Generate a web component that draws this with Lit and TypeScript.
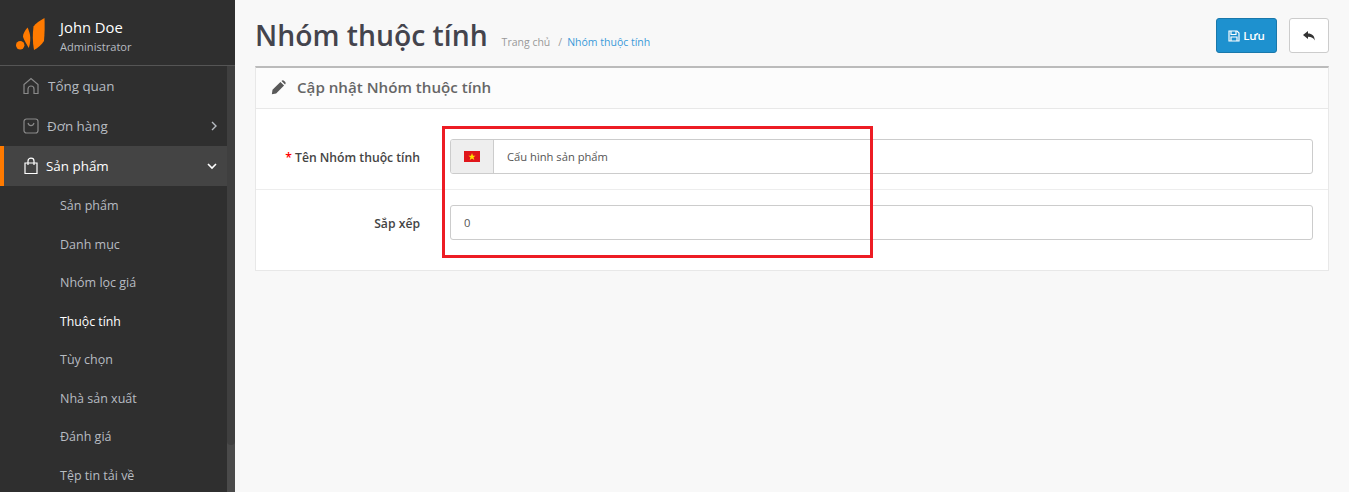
import { LitElement, html, css } from "lit";
import { customElement } from "lit/decorators.js";

const subs = ["Sản phẩm", "Danh mục", "Nhóm lọc giá", "Thuộc tính", "Tùy chọn", "Nhà sản xuất", "Đánh giá", "Tệp tin tải về"];

@customElement("app-root")
export class AppRoot extends LitElement {
  static styles = css`
    :host { display: block; width: 1349px; height: 492px; overflow: hidden; position: relative; background: #f8f8f8; font-family: "Open Sans", "Noto Sans", sans-serif; }
    * { box-sizing: border-box; }
    .page { display: flex; height: 492px; }
    .side { width: 235px; flex: none; background: #2f2f2f; display: flex; flex-direction: column; color: #b7bcc2; }
    .user { height: 66px; flex: none; border-bottom: 1px solid #555; display: flex; align-items: flex-start; padding: 17px 0 0 16px; }
    .logo { width: 29px; height: 34px; flex: none; margin-right: 15px; }
    .uname { color: #fff; font-size: 14.8px; line-height: 20px; }
    .urole { color: #b7bcc2; font-size: 11.1px; line-height: 16px; margin-top: 2px; }
    .body { flex: 1; display: flex; min-height: 0; }
    .menu { width: 227px; flex: none; overflow: hidden; }
    .track { width: 8px; flex: none; background: #4a4a4a; display: flex; flex-direction: column; }
    .thumb { height: 379px; background: #3f3f3f; border-radius: 0 0 4px 4px; }
    .item { height: 40px; display: flex; align-items: center; font-size: 13.4px; padding: 0 0 0 22px; position: relative; color: #b7bcc2; }
    .item svg.ic { width: 18px; height: 18px; flex: none; margin: 0 7px 0 0; }
    .item.home svg.ic { margin-right: 8px; }
    .item.active { background: #444; color: #fff; border-left: 4px solid #ff7a00; padding-left: 18px; }
    .item.active svg.ic { margin-right: 6px; }
    .chev { margin-left: auto; margin-right: 8px; width: 10px; height: 10px; flex: none; }
    .active .chev { margin-right: 10px; }
    .sub { height: 38.5px; display: flex; align-items: center; padding-left: 60px; font-size: 12.5px; color: #b7bcc2; }
    .sub.on { color: #fff; font-weight: 500; font-size: 12.3px; }
    .subs { padding-top: 0.4px; }
    .main { flex: 1; min-width: 0; padding: 0 20px; }
    .head { height: 66px; display: flex; align-items: flex-start; }
    h1 { margin: 13px 0 0 0; font-weight: 600; font-size: 28.3px; line-height: 44px; color: #44444d; }
    .crumb { margin: 35px 0 0 14px; font-size: 10.5px; line-height: 15px; color: #999; white-space: nowrap; }
    .crumb span { margin: 0 5px 0 8px; }
    .crumb a { color: #3a9ad9; }
    .acts { margin-left: auto; display: flex; gap: 12px; padding-top: 18px; }
    .btn { height: 35px; border-radius: 3px; display: flex; align-items: center; justify-content: center; }
    .save { width: 61px; background: #1e91cf; border: 1px solid #1978ab; color: #fff; font-size: 11.5px; font-weight: 600; gap: 3px; }
    .back { width: 40px; background: #fff; border: 1px solid #ccc; }
    .card { background: #fff; border: 1px solid #e8e8e8; border-top: 2px solid #bbb; }
    .ctitle { height: 41px; background: #fcfcfc; border-bottom: 1px solid #e8e8e8; display: flex; align-items: center; padding: 0 0 2px 15px; font-size: 15.15px; font-weight: 600; color: #666; }
    .ctitle svg { width: 15px; height: 15px; margin: 1px 11px 0 0; }
    .row { display: flex; align-items: flex-start; padding-right: 15px; }
    .row.r1 { height: 80px; padding-top: 30px; }
    .row.r2 { height: 81px; padding-top: 15px; border-top: 1px solid #ededed; }
    .lab { width: 164px; flex: none; text-align: right; font-size: 12.2px; font-weight: 600; color: #444; line-height: 37px; }
    .lab b { color: #f00; font-weight: 600; }
    .ctrl { margin-left: 30px; flex: 1; display: flex; height: 35px; border: 1px solid #ccc; border-radius: 3px; overflow: hidden; background: #fff; font-size: 11.2px; color: #555; align-items: center; }
    .addon { width: 43px; height: 100%; background: #eee; border-right: 1px solid #ccc; display: flex; align-items: center; justify-content: center; flex: none; }
    .addon svg { width: 16px; height: 11px; }
    .val { padding-left: 13px; }
    .mark { position: absolute; left: 442px; top: 126px; width: 431px; height: 132px; border: 3px solid #ed1c24; pointer-events: none; }
  `;

  render() {
    return html`
      <div class="page">
        <aside class="side">
          <div class="user">
            <svg class="logo" viewBox="0 0 29 34">
              <circle cx="4.2" cy="28.3" r="4.2" fill="#ff7a00"/>
              <path d="M11.5 10.5 C8.5 14 7 17 7 19.5 C7.5 22 9.5 25 12.8 31 C14.5 26 14.5 21 14 18 C13.5 15 12.5 12.5 11.5 10.5 Z" fill="#ff7a00"/>
              <path d="M28.5 1 C24 3.5 19.5 6.5 17.5 9.5 C16.5 17 16.5 25 18 33 C22 31 26 27.5 28 24 C28.7 16 28.8 8 28.5 1 Z" fill="#ff7a00"/>
            </svg>
            <div>
              <div class="uname">John Doe</div>
              <div class="urole">Administrator</div>
            </div>
          </div>
          <div class="body">
            <nav class="menu">
              <div class="item home">
                <svg class="ic" viewBox="0 0 18 18" fill="none" stroke="#8a8a8a" stroke-width="1.2">
                  <path d="M2 16.5 V7.5 L9 1.5 L16 7.5 V16.5 H12 V12 A3 3 0 0 0 6 12 V16.5 Z"/>
                </svg>
                <span>Tổng quan</span>
              </div>
              <div class="item">
                <svg class="ic" viewBox="0 0 18 18" fill="none" stroke="#8a8a8a" stroke-width="1.2">
                  <rect x="2" y="2" width="14" height="14" rx="2.5"/>
                  <path d="M6 6 C7 9.5 11 9.5 12 6"/>
                </svg>
                <span>Đơn hàng</span>
                <svg class="chev" viewBox="0 0 10 10" fill="none" stroke="#b7bcc2" stroke-width="1.4"><path d="M3 1 L7 5 L3 9"/></svg>
              </div>
              <div class="item active">
                <svg class="ic" viewBox="0 0 18 18" fill="none" stroke="#fff" stroke-width="1.2">
                  <path d="M3 6 H15 V16.5 H3 Z"/>
                  <path d="M6 8 V4 A3 2.8 0 0 1 12 4 V8"/>
                </svg>
                <span>Sản phẩm</span>
                <svg class="chev" viewBox="0 0 10 10" fill="none" stroke="#fff" stroke-width="1.6"><path d="M1 3 L5 7 L9 3"/></svg>
              </div>
              <div class="subs">
                ${subs.map((s) => html`<div class="sub ${s === "Thuộc tính" ? "on" : ""}">${s}</div>`)}
              </div>
            </nav>
            <div class="track"><div class="thumb"></div></div>
          </div>
        </aside>
        <main class="main">
          <div class="head">
            <h1>Nhóm thuộc tính</h1>
            <div class="crumb">Trang chủ<span>/</span><a>Nhóm thuộc tính</a></div>
            <div class="acts">
              <div class="btn save">
                <svg width="12" height="12" viewBox="0 0 12 12" fill="none" stroke="#fff" stroke-width="1.2">
                  <path d="M1 1 H9 L11 3 V11 H1 Z"/>
                  <path d="M3 1 V4.5 H8 V1 M3 11 V7 H9 V11"/>
                </svg>
                <span>Lưu</span>
              </div>
              <div class="btn back">
                <svg width="14" height="12" viewBox="0 0 14 12"><path d="M1 5 L6 1 V3.5 C10 3.5 12.5 5.5 12.8 10.5 C11.5 8 9.5 6.8 6 6.8 V9 Z" fill="#333"/></svg>
              </div>
            </div>
          </div>
          <section class="card">
            <div class="ctitle">
              <svg viewBox="0 0 14 14"><path d="M.8 13.2 L1.4 9.2 L8.8 1.8 L12.2 5.2 L4.8 12.6 Z M9.8 .9 C10.6 .1 11.5 .1 12.3 .9 L13.1 1.7 C13.9 2.5 13.9 3.4 13.1 4.2 Z" fill="#595959"/></svg>
              <span>Cập nhật Nhóm thuộc tính</span>
            </div>
            <div class="row r1">
              <div class="lab"><b>*</b> Tên Nhóm thuộc tính</div>
              <div class="ctrl">
                <div class="addon">
                  <svg viewBox="0 0 16 11"><rect width="16" height="11" fill="#e0161b"/><path d="M8 2 L9 4.7 L11.6 4.7 L9.5 6.3 L10.3 9 L8 7.4 L5.7 9 L6.5 6.3 L4.4 4.7 L7 4.7 Z" fill="#ffe100"/></svg>
                </div>
                <span class="val">Cấu hình sản phẩm</span>
              </div>
            </div>
            <div class="row r2">
              <div class="lab">Sắp xếp</div>
              <div class="ctrl"><span class="val">0</span></div>
            </div>
          </section>
        </main>
      </div>
      <div class="mark"></div>
    `;
  }
}
